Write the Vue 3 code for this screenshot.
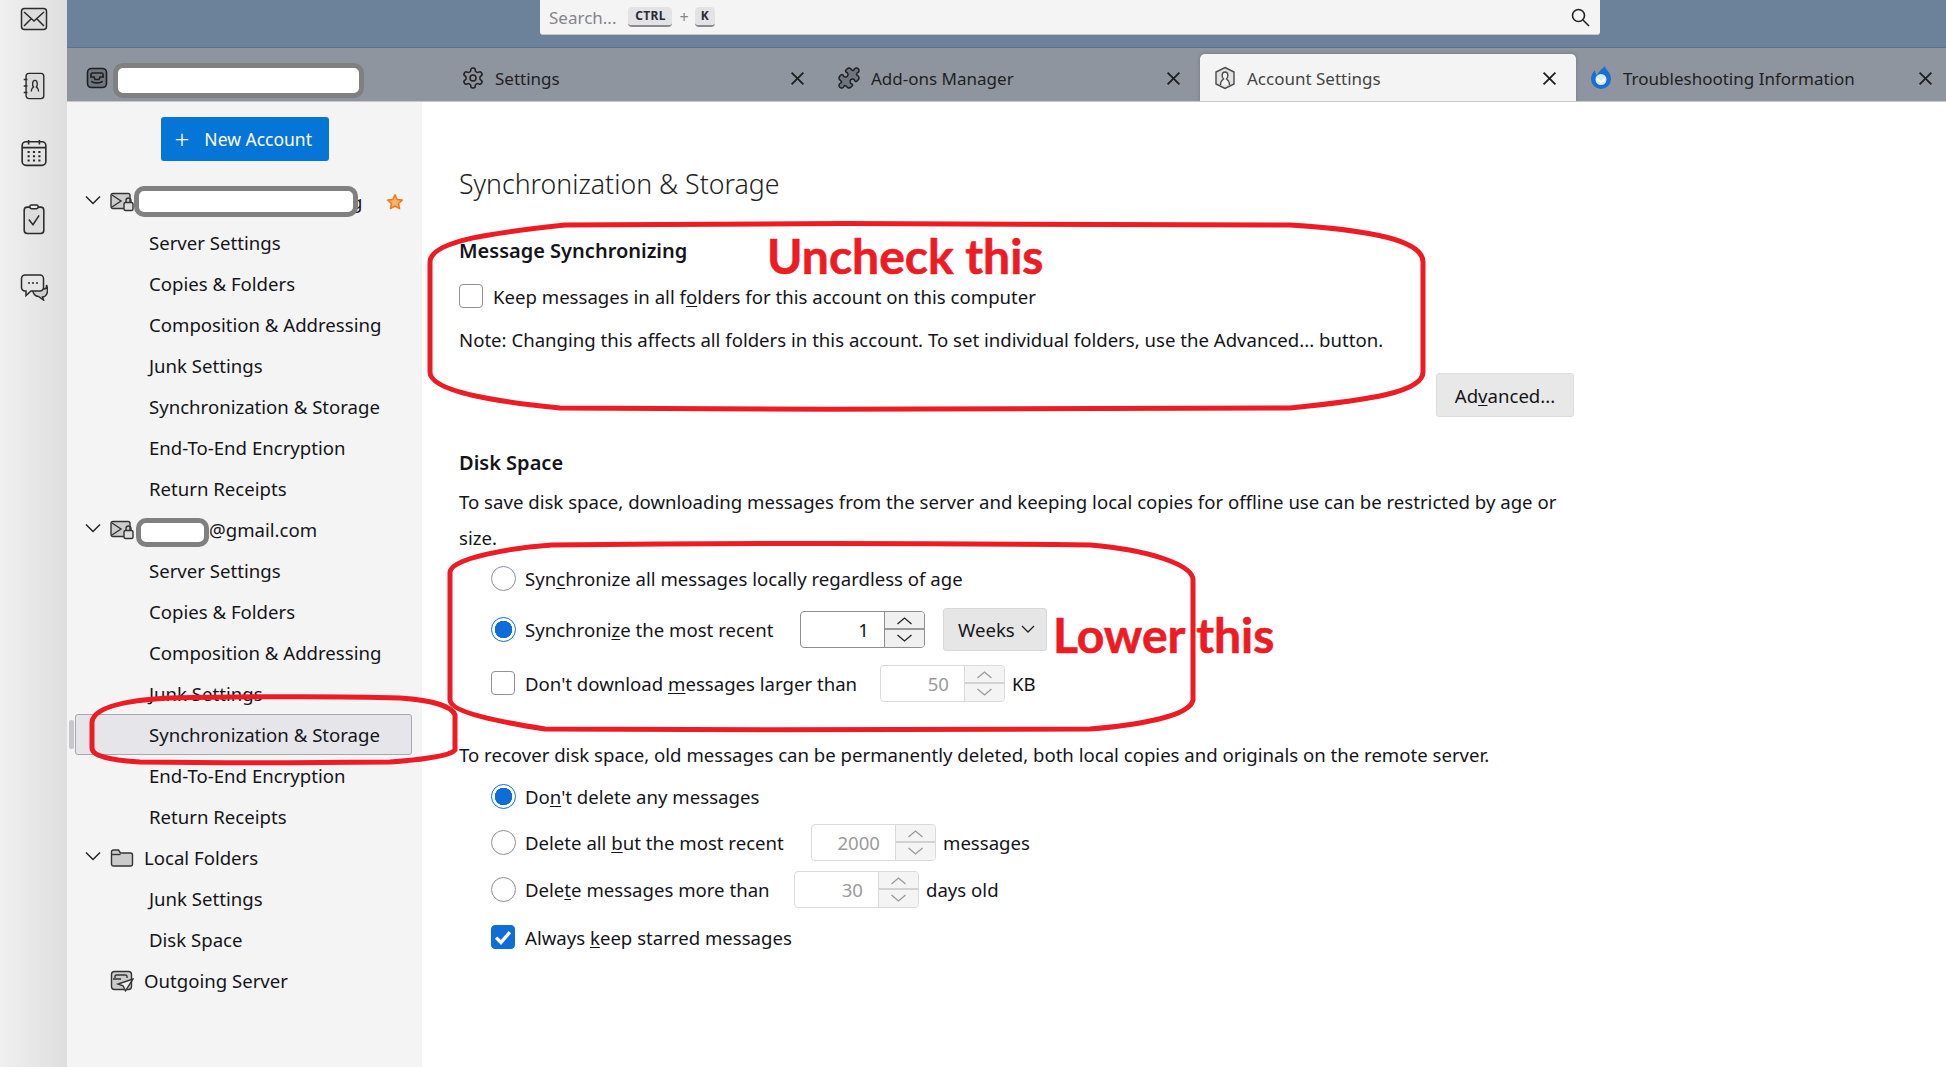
<script setup>
const tabs = [
  { key: 'mail', label: '' },
  { key: 'gear', label: 'Settings' },
  { key: 'puzzle', label: 'Add-ons Manager' },
  { key: 'account', label: 'Account Settings', active: true },
  { key: 'tb', label: 'Troubleshooting Information' }
]
const childA = ['Server Settings', 'Copies & Folders', 'Composition & Addressing', 'Junk Settings', 'Synchronization & Storage', 'End-To-End Encryption', 'Return Receipts']
</script>

<template>
  <div class="app">
    <nav class="spaces">
      <svg class="sp" viewBox="0 0 28 24" fill="#dcdcdc" stroke="#2b2b2b" stroke-width="1.5"><rect x="1.5" y="1.5" width="25" height="21" rx="3"/><path d="M4 5l10 9 10-9M4 19l7-7M24 19l-7-7" fill="none"/></svg>
      <svg class="sp" viewBox="0 0 24 30" fill="#dcdcdc" stroke="#2b2b2b" stroke-width="1.5"><rect x="3.5" y="1.5" width="19" height="27" rx="3"/><path d="M1 8h4M1 15h4M1 22h4" fill="none"/><path d="M9 21c0-3 1-4 2.500-5-1.500-1.500-1.500-7 1.500-7s3 5.500 1.500 7c1.500 1 2.500 2 2.500 5" fill="none"/></svg>
      <svg class="sp" viewBox="0 0 26 26" fill="#e4e4e4" stroke="#2b2b2b" stroke-width="1.500"><rect x="2" y="2.500" width="22" height="22" rx="3.500"/><path d="M2 8h22M8 1v4M18 1v4" fill="none"/><path d="M7 12h2M12 12h2M17 12h2M7 16h2M12 16h2M17 16h2M7 20h2M12 20h2M17 20h2" fill="none" stroke-width="1.800"/></svg>
      <svg class="sp tall" viewBox="0 0 22 30" fill="#dcdcdc" stroke="#2b2b2b" stroke-width="1.500"><rect x="1.500" y="3" width="19" height="25.500" rx="3"/><rect x="7" y="1" width="8" height="3.500" rx="1.500" fill="#eee"/><path d="M6 15l4 5 6-9" fill="none"/></svg>
      <svg class="sp" viewBox="0 0 28 28" fill="#e6e6e6" stroke="#2b2b2b" stroke-width="1.500"><path d="M12 16h12a2.500 2.500 0 0 0 2.500-2.500V12c3 8-1 12-4 12l1 3-5-3.500c-3 0-6-3-6-7.500z" fill="#cfcfcf"/><path d="M5 2h15a3.500 3.500 0 0 1 3.500 3.500v9A3.500 3.500 0 0 1 20 18h-9l-5 4.500V18H5a3.500 3.500 0 0 1-3.500-3.500v-9A3.500 3.500 0 0 1 5 2z"/><path d="M8 10h2M12 10h2M16 10h2" fill="none"/></svg>
    </nav>

    <div class="window">
      <header class="topbar">
        <div class="search">
          <span class="ph">Search...</span>
          <kbd class="key ctrl">CTRL</kbd>
          <span class="plus">+</span>
          <kbd class="key k">K</kbd>
          <svg class="loupe" viewBox="0 0 20 20" fill="none" stroke="#222" stroke-width="1.600"><circle cx="8.500" cy="8.500" r="6"/><path d="M13 13l6 6"/></svg>
        </div>
      </header>

      <div class="tabbar">
        <div v-for="t in tabs" :key="t.key" class="tab" :class="{ active: t.active }">
          <svg v-if="t.key === 'mail'" class="ti" viewBox="0 0 24 24" fill="#6f7680" stroke="#1f1f1f" stroke-width="1.600"><rect x="2.500" y="2.500" width="19" height="19" rx="4"/><path d="M6 11V8.500A1.500 1.500 0 0 1 7.500 7h9A1.500 1.500 0 0 1 18 8.500V11M5 11h4l1 2.500h4l1-2.500h4M6.500 15c1 2.500 10 2.500 11 0" fill="none"/></svg>
          <svg v-else-if="t.key === 'gear'" class="ti" viewBox="0 0 24 24" fill="none" stroke="#1f1f1f" stroke-width="1.500"><path d="M12.220 2h-.44a2 2 0 0 0-2 2v.18a2 2 0 0 1-1 1.730l-.43.25a2 2 0 0 1-2 0l-.15-.08a2 2 0 0 0-2.730.73l-.22.38a2 2 0 0 0 .73 2.730l.15.1a2 2 0 0 1 1 1.720v.51a2 2 0 0 1-1 1.740l-.15.09a2 2 0 0 0-.73 2.730l.22.38a2 2 0 0 0 2.730.73l.15-.08a2 2 0 0 1 2 0l.43.25a2 2 0 0 1 1 1.730V20a2 2 0 0 0 2 2h.44a2 2 0 0 0 2-2v-.18a2 2 0 0 1 1-1.730l.43-.25a2 2 0 0 1 2 0l.15.08a2 2 0 0 0 2.730-.73l.22-.39a2 2 0 0 0-.73-2.730l-.15-.08a2 2 0 0 1-1-1.740v-.5a2 2 0 0 1 1-1.740l.15-.09a2 2 0 0 0 .73-2.730l-.22-.38a2 2 0 0 0-2.730-.73l-.15.08a2 2 0 0 1-2 0l-.43-.25a2 2 0 0 1-1-1.730V4a2 2 0 0 0-2-2z"/><circle cx="12" cy="12" r="3"/></svg>
          <svg v-else-if="t.key === 'puzzle'" class="ti" viewBox="0 0 24 24" fill="#6f7680" stroke="#1f1f1f" stroke-width="1.500"><path d="M19.439 7.850c-.049.322.059.648.289.878l1.568 1.568c.47.47.706 1.087.706 1.704s-.235 1.233-.706 1.704l-1.611 1.611a.98.98 0 0 1-.837.276c-.47-.07-.802-.48-.968-.925a2.501 2.501 0 1 0-3.214 3.214c.446.166.855.497.925.968a.979.979 0 0 1-.276.837l-1.610 1.610a2.404 2.404 0 0 1-1.705.707 2.402 2.402 0 0 1-1.704-.706l-1.568-1.568a1.026 1.026 0 0 0-.877-.29c-.493.074-.84.504-1.020.968a2.500 2.500 0 1 1-3.237-3.237c.464-.18.894-.527.967-1.020a1.026 1.026 0 0 0-.289-.877l-1.568-1.568A2.402 2.402 0 0 1 1.998 12c0-.617.236-1.234.706-1.704L4.230 8.770c.24-.24.581-.353.917-.303.515.077.877.528 1.073 1.010a2.500 2.500 0 1 0 3.259-3.259c-.482-.196-.933-.558-1.010-1.073-.05-.336.062-.676.303-.917l1.525-1.525A2.402 2.402 0 0 1 12 1.998c.617 0 1.234.236 1.704.706l1.568 1.568c.23.23.556.338.877.29.493-.074.84-.504 1.020-.968a2.500 2.500 0 1 1 3.237 3.237c-.464.18-.894.527-.967 1.020Z"/></svg>
          <svg v-else-if="t.key === 'account'" class="ti" viewBox="0 0 24 24" fill="#e2e2e2" stroke="#4a4a4a" stroke-width="1.400"><path d="M12 1.500l9 4.500v12l-9 4.500-9-4.500V6z"/><path d="M7.500 19c0-4 1.500-5 3-6-2-2-2-7 1.500-7s3.500 5 1.500 7c1.500 1 3 2 3 6" fill="#f4f4f4"/></svg>
          <svg v-else class="ti" viewBox="0 0 24 24"><path d="M16 0c-.5 3 6 6 6 13a10 10 0 0 1-20 0c0-4 2-7 4-9 0 3 1 4 2 5 1-3 5-6 8-9z" fill="#1b6fd2"/><circle cx="12" cy="13.500" r="5.500" fill="#d6e9fb"/><path d="M8 12l4 2.800 4-2.800v2.500l-4 3-4-3z" fill="#fff"/></svg>
          <span class="tl">{{ t.label }}</span>
          <svg v-if="t.key !== 'mail'" class="tx" viewBox="0 0 14 14" fill="none" stroke="#1f1f1f" stroke-width="1.700"><path d="M1.500 1.500l11 11M12.500 1.500l-11 11"/></svg>
        </div>
      </div>

      <div class="body">
        <aside class="side">
          <div class="newwrap">
            <button class="newbtn"><span class="pl">+</span>New Account</button>
          </div>

          <div class="row acct">
            <svg class="chev" viewBox="0 0 16 10" fill="none" stroke="#222" stroke-width="1.500"><path d="M1 1.500l7 7 7-7"/></svg>
            <svg class="ai" viewBox="0 0 24 20" fill="#ccc" stroke="#333" stroke-width="1.400"><rect x="1" y="1.500" width="19" height="15" rx="2"/><path d="M2 3l9 6-9 6" fill="none"/><rect x="14" y="10.500" width="9" height="8" rx="1.500" fill="#ddd"/><path d="M16 10.500V8.500a2.500 2.500 0 0 1 5 0v2" fill="none"/></svg>
            <span class="at tail">g</span>
            <svg class="star" viewBox="0 0 20 20" fill="#ffb26b" stroke="#f57a1e" stroke-width="1.800" stroke-linejoin="round"><path d="M10 2l2.400 5.200 5.600.7-4.100 3.800 1.100 5.600-5-2.800-5 2.800 1.100-5.600L2 7.900l5.600-.7z"/></svg>
          </div>
          <div v-for="c in childA" :key="'a' + c" class="row child">{{ c }}</div>

          <div class="row acct">
            <svg class="chev" viewBox="0 0 16 10" fill="none" stroke="#222" stroke-width="1.500"><path d="M1 1.500l7 7 7-7"/></svg>
            <svg class="ai" viewBox="0 0 24 20" fill="#ccc" stroke="#333" stroke-width="1.400"><rect x="1" y="1.500" width="19" height="15" rx="2"/><path d="M2 3l9 6-9 6" fill="none"/><rect x="14" y="10.500" width="9" height="8" rx="1.500" fill="#ddd"/><path d="M16 10.500V8.500a2.500 2.500 0 0 1 5 0v2" fill="none"/></svg>
            <span class="at gm">@gmail.com</span>
          </div>
          <div v-for="c in childA" :key="'b' + c" class="row child" :class="{ sel: c.startsWith('Sync') }">{{ c }}</div>

          <div class="row acct">
            <svg class="chev" viewBox="0 0 16 10" fill="none" stroke="#222" stroke-width="1.500"><path d="M1 1.500l7 7 7-7"/></svg>
            <svg class="ai" viewBox="0 0 24 20" fill="#cbcbcb" stroke="#333" stroke-width="1.400"><path d="M1.500 4A2 2 0 0 1 3.500 2h5l2 3h10a2 2 0 0 1 2 2v9a2 2 0 0 1-2 2h-17a2 2 0 0 1-2-2z"/><path d="M2 6.500h8.500" fill="none"/></svg>
            <span class="at">Local Folders</span>
          </div>
          <div class="row child">Junk Settings</div>
          <div class="row child">Disk Space</div>
          <div class="row acct">
            <span class="chev"></span>
            <svg class="ai" viewBox="0 0 24 22" fill="#ccc" stroke="#333" stroke-width="1.400"><rect x="1.500" y="1.500" width="20" height="18" rx="3"/><path d="M5 8V6.500A1.500 1.500 0 0 1 6.500 5h9A1.500 1.500 0 0 1 17 6.500V8M3 9h8" fill="none"/><path d="M23 9L8 14l5 1.800 2.500 5z" fill="#eee"/></svg>
            <span class="at">Outgoing Server</span>
          </div>
        </aside>

        <main class="main">
          <h1>Synchronization &amp; Storage</h1>
          <h2 class="h-msg">Message Synchronizing</h2>
          <label class="line keep"><span class="cb"></span><span>Keep messages in all f<u>o</u>lders for this account on this computer</span></label>
          <p class="note">Note: Changing this affects all folders in this account. To set individual folders, use the Advanced... button.</p>
          <div class="advrow"><button class="adv">Ad<u>v</u>anced...</button></div>

          <h2 class="h-disk">Disk Space</h2>
          <p class="para">To save disk space, downloading messages from the server and keeping local copies for offline use can be restricted by age or size.</p>

          <div class="opts">
            <label class="opt o1"><span class="rb"></span><span>Syn<u>c</u>hronize all messages locally regardless of age</span></label>
            <label class="opt o2"><span class="rb on"></span><span class="lab w-recent">Synchroni<u>z</u>e the most recent</span>
              <span class="spin"><span class="val">1</span><span class="arrows"><svg viewBox="0 0 16 8" fill="none" stroke="#222" stroke-width="1.300"><path d="M1 7l7-6 7 6"/></svg><i></i><svg viewBox="0 0 16 8" fill="none" stroke="#222" stroke-width="1.300"><path d="M1 1l7 6 7-6"/></svg></span></span>
              <span class="sel-btn">Weeks<svg viewBox="0 0 14 8" fill="none" stroke="#222" stroke-width="1.300"><path d="M1 1l6 6 6-6"/></svg></span>
            </label>
            <label class="opt o3"><span class="cb big"></span><span class="lab w-large">Don't download <u>m</u>essages larger than</span>
              <span class="spin off"><span class="val">50</span><span class="arrows"><svg viewBox="0 0 16 8" fill="none" stroke="#999" stroke-width="1.300"><path d="M1 7l7-6 7 6"/></svg><i></i><svg viewBox="0 0 16 8" fill="none" stroke="#999" stroke-width="1.300"><path d="M1 1l7 6 7-6"/></svg></span></span>
              <span class="unit">KB</span>
            </label>
          </div>

          <p class="recover">To recover disk space, old messages can be permanently deleted, both local copies and originals on the remote server.</p>

          <div class="opts">
            <label class="opt d1"><span class="rb on"></span><span>Do<u>n</u>'t delete any messages</span></label>
            <label class="opt d2"><span class="rb"></span><span class="lab w-all">Delete all <u>b</u>ut the most recent</span>
              <span class="spin off"><span class="val">2000</span><span class="arrows"><svg viewBox="0 0 16 8" fill="none" stroke="#999" stroke-width="1.300"><path d="M1 7l7-6 7 6"/></svg><i></i><svg viewBox="0 0 16 8" fill="none" stroke="#999" stroke-width="1.300"><path d="M1 1l7 6 7-6"/></svg></span></span>
              <span class="unit">messages</span>
            </label>
            <label class="opt d3"><span class="rb"></span><span class="lab w-more">Dele<u>t</u>e messages more than</span>
              <span class="spin off"><span class="val">30</span><span class="arrows"><svg viewBox="0 0 16 8" fill="none" stroke="#999" stroke-width="1.300"><path d="M1 7l7-6 7 6"/></svg><i></i><svg viewBox="0 0 16 8" fill="none" stroke="#999" stroke-width="1.300"><path d="M1 1l7 6 7-6"/></svg></span></span>
              <span class="unit">days old</span>
            </label>
            <label class="opt d4"><span class="cb big checked"><svg viewBox="0 0 16 16" fill="none" stroke="#fff" stroke-width="2.400"><path d="M3 8.500l3.500 3.500L13 4.500"/></svg></span><span>Always <u>k</u>eep starred messages</span></label>
          </div>
        </main>
      </div>
    </div>

    <!-- Overlays drawn on top of the screenshot: redactions and red annotations -->
    <span class="blot b1"></span>
    <span class="blot b2"></span>
    <span class="blot b3"></span>
    <span class="note-red n1">Uncheck this</span>
    <span class="note-red n2">Lower this</span>
    <svg class="marks" viewBox="0 0 1946 1067" fill="none" stroke="#ed1c24" stroke-width="5">
      <path d="M430 262C430 240 500 232 565 225C800 223 1100 223 1290 225C1370 230 1423 240 1423 262V372C1423 392 1370 400 1290 408C1100 410 800 410 560 408C500 402 430 392 430 372Z"/>
      <path d="M450 572C452 558 510 548 552 545C730 543 930 543 1090 545C1150 550 1193 565 1193 580V700C1190 716 1140 725 1090 729C900 730 730 730 545 729C500 722 450 712 450 700Z"/>
      <path d="M92 722C94 706 130 700 170 698C280 696 340 696 400 698C430 700 452 706 455 715V750C450 756 420 760 390 762C300 763 210 763 140 762C110 760 92 756 92 748Z"/>
    </svg>
  </div>
</template>

<style>
html, body { margin: 0; padding: 0; background: #fff; overflow: hidden; }
</style>

<style scoped>
.app { position: relative; display: flex; width: 1946px; height: 1067px; overflow: hidden; font-family: "Noto Sans", "Open Sans", sans-serif; font-size: 18.6px; color: #15141a; background: #fff; }
.spaces { flex: 0 0 67px; box-sizing: border-box; background: linear-gradient(90deg, #f0f0f0, #dedede); display: flex; flex-direction: column; align-items: center; padding-top: 5px; }
.sp { width: 28px; height: 28px; margin-bottom: 39px; }
.sp.tall { height: 31px; margin-top: -2px; margin-bottom: 38px; }
.window { flex: 1; min-width: 0; display: flex; flex-direction: column; }
.topbar { height: 48px; flex: none; box-sizing: border-box; background: #6c829b; border-bottom: 1px solid #5d7189; padding-left: 473px; }
.search { width: 1060px; height: 35px; box-sizing: border-box; background: #f4f4f4; border-bottom: 1px solid #c8c8c8; border-radius: 0 0 3px 3px; display: flex; align-items: center; padding: 0 0 0 9px; position: relative; }
.ph { color: #84848c; font-size: 17px; margin-right: 12px; }
.key { font-family: "Noto Sans", sans-serif; font-size: 12px; font-weight: 700; line-height: 18px; height: 20px; width: 20px; text-align: center; box-sizing: border-box; background: #e3e3e6; border-bottom: 2px solid #8a8a90; border-radius: 4px; color: #2a2a3a; }
.key.ctrl { width: 44px; letter-spacing: .3px; }
.plus { color: #84848c; margin: 0 6px 0 7px; font-size: 16px; }
.loupe { width: 20px; height: 20px; margin-left: auto; margin-right: 10px; }
.tabbar { height: 54px; flex: none; box-sizing: border-box; background: #8e959f; border-bottom: 1px solid #c6c8cc; padding: 6px 0 0 5px; display: flex; overflow: hidden; }
.tab { flex: 0 0 376px; box-sizing: border-box; height: 48px; display: flex; align-items: center; padding: 0 19px 0 13px; border-radius: 5px 5px 0 0; color: #1f1f1f; }
.tab.active { background: #f4f4f4; color: #444; box-shadow: 0 0 4px rgba(0,0,0,.2); }
.ti { width: 24px; height: 24px; flex: none; margin-right: 10px; }
.tl { flex: 1; font-size: 17px; white-space: nowrap; }
.tx { width: 15px; height: 15px; flex: none; }
.body { flex: 1; display: flex; min-height: 0; }
.side { flex: 0 0 355px; box-sizing: border-box; background: #f4f4f4; padding-top: 15px; position: relative; }
.newwrap { display: flex; justify-content: center; margin-bottom: 20px; }
.newbtn { width: 168px; height: 44px; border: 0; border-radius: 3px; background: #0675d8; color: #fff; font: inherit; font-size: 17.5px; display: flex; align-items: center; padding: 0 0 0 14px; }
.pl { font-size: 26px; font-weight: 300; line-height: 1; margin-right: 15px; }
.row { height: 41px; box-sizing: border-box; display: flex; align-items: center; white-space: nowrap; }
.child { padding-left: 82px; }
.acct { padding-left: 18px; }
.chev { width: 16px; height: 10px; flex: none; margin-right: 9px; display: block; margin-top: -4px; }
.ai { width: 24px; height: 22px; flex: none; margin-right: 10px; }
.at { flex: 1; }
.at.gm { padding-left: 65px; }
.at.tail { padding-left: 207px; }
.star { width: 18px; height: 18px; flex: none; margin-right: 18px; }
.sel { position: relative; margin: 0 10px 0 8px; padding-left: 73px; background: #e6e6ea; border: 1px solid #a8a8ae; border-radius: 3px; }
.sel::before { content: ""; position: absolute; left: -7px; top: 5px; width: 5px; height: 29px; background: #c8c8cc; border-radius: 2px; }
.main { flex: 1; box-sizing: border-box; padding: 64px 0 0 37px; }
h1 { margin: 0; width: 600px; font-size: 26.7px; line-height: 36px; font-weight: 300; color: #222; }
h2 { margin: 0; font-size: 20px; line-height: 26px; font-weight: 600; }
.h-msg { margin-top: 36px; }
.line { display: flex; align-items: center; height: 30px; margin-top: 17px; }
.cb { width: 24px; height: 24px; box-sizing: border-box; border: 1px solid #8f8f9d; border-radius: 4px; background: #fff; flex: none; margin-right: 10px; display: block; }
.cb.checked { background: #0f6ed6; border-color: #0f6ed6; }
.cb.checked svg { width: 22px; height: 22px; display: block; }
.note { margin: 16px 0 0; line-height: 26px; white-space: nowrap; }
.advrow { width: 1115px; display: flex; justify-content: flex-end; margin-top: 20px; }
.adv { width: 138px; height: 44px; background: #e8e8e8; border: 1px solid #dcdcdc; border-radius: 3px; font: inherit; color: #15141a; }
.h-disk { margin-top: 33px; }
.para { width: 1115px; margin: 8px 0 0; line-height: 36px; }
.opts { padding-left: 32px; }
.opt { display: flex; align-items: center; white-space: nowrap; }
.o1 { height: 30px; margin-top: 7px; }
.o2 { height: 44px; margin-top: 14px; }
.o3 { height: 38px; margin-top: 13px; }
.recover { margin: 40px 0 0; line-height: 26px; white-space: nowrap; }
.d1 { height: 30px; margin-top: 13px; }
.d2 { height: 36px; margin-top: 13px; }
.d3 { height: 36px; margin-top: 11px; }
.d4 { height: 30px; margin-top: 15px; }
.rb { width: 25px; height: 25px; box-sizing: border-box; border: 1px solid #8f8f9d; border-radius: 50%; background: #fff; flex: none; margin-right: 9px; display: block; }
.rb.on { border: 1.5px solid #0f6ed6; background: radial-gradient(circle, #0f6ed6 0 8.5px, #fff 9px); }
.lab { display: block; flex: none; }
.w-recent { width: 275px; }
.w-large { width: 355px; }
.w-all { width: 286px; }
.w-more { width: 269px; }
.spin { width: 125px; height: 37px; box-sizing: border-box; border: 1px solid #8e8e8e; border-radius: 4px; display: flex; background: #fff; flex: none; }
.val { flex: 1; text-align: right; padding-right: 15px; line-height: 35px; }
.arrows { width: 40px; background: #f0f0f0; border-left: 1px solid #8e8e8e; display: flex; flex-direction: column; align-items: center; justify-content: space-between; padding: 5px 0; box-sizing: border-box; border-radius: 0 3px 3px 0; }
.arrows svg { width: 17px; height: 8px; }
.arrows i { width: 100%; height: 2px; background: #9a9a9a; }
.spin.off { border-color: #dadada; color: #9a9a9a; }
.spin.off .arrows { border-left-color: #dadada; background: #f4f4f4; }
.spin.off .arrows i { background: #d2d2d2; }
.sel-btn { margin-left: 18px; width: 104px; height: 43px; box-sizing: border-box; background: #e6e6e6; border: 1px solid #d8d8d8; border-radius: 3px; display: flex; align-items: center; padding-left: 14px; }
.sel-btn svg { width: 14px; height: 8px; margin-left: 6px; }
.unit { margin-left: 7px; }
u { text-underline-offset: 2px; text-decoration-thickness: 1px; }
.blot { position: absolute; box-sizing: border-box; background: #fff; border: 5px solid #808080; border-radius: 10px; }
.b1 { left: 113px; top: 63px; width: 251px; height: 35px; }
.b2 { left: 134px; top: 186px; width: 224px; height: 31px; }
.b3 { left: 136px; top: 518px; width: 73px; height: 29px; }
.note-red { position: absolute; font-family: Lato, sans-serif; font-weight: 700; font-size: 48px; line-height: 56px; color: #ed1c24; white-space: nowrap; -webkit-text-stroke: .6px #ed1c24; }
.n1 { left: 767px; top: 228px; }
.n2 { left: 1053px; top: 607px; }
.marks { position: absolute; left: 0; top: 0; width: 1946px; height: 1067px; pointer-events: none; }
</style>
